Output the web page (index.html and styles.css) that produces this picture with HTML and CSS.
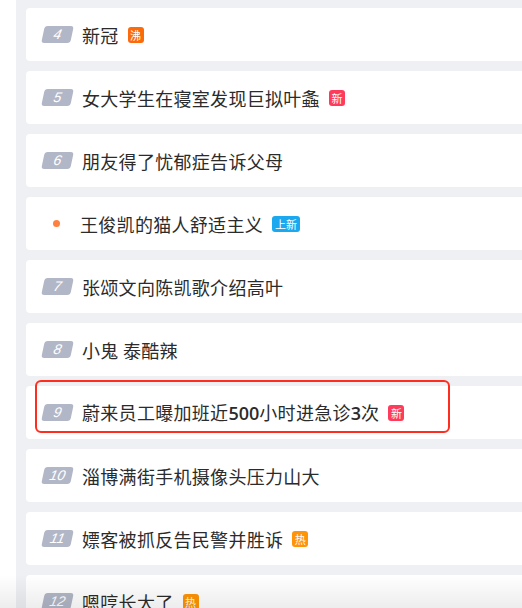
FILE: index.html
```html
<!DOCTYPE html>
<html lang="zh">
<head>
    <meta charset="UTF-8" />
    <meta name="viewport" content="width=device-width, initial-scale=1.0" />
    <title>热搜榜</title>
    <link rel="stylesheet" href="styles.css">
</head>
<body>
    <div class="lista">
        <div class="item"><span class="rank">4</span><span class="titulo">新冠</span><span class="tag tag-fei">沸</span></div>
        <div class="item"><span class="rank">5</span><span class="titulo">女大学生在寝室发现巨拟叶螽</span><span class="tag tag-xin">新</span></div>
        <div class="item"><span class="rank">6</span><span class="titulo">朋友得了忧郁症告诉父母</span></div>
        <div class="item item-punto"><span class="punto"></span><span class="titulo">王俊凯的猫人舒适主义</span><span class="tag tag-shang">上新</span></div>
        <div class="item"><span class="rank">7</span><span class="titulo">张颂文向陈凯歌介绍高叶</span></div>
        <div class="item"><span class="rank">8</span><span class="titulo">小鬼 泰酷辣</span></div>
        <div class="item marcado"><span class="rank">9</span><span class="titulo">蔚来员工曝加班近<b>500</b>小时进急诊<b>3</b>次</span><span class="tag tag-xin">新</span><span class="recuadro"></span></div>
        <div class="item"><span class="rank">10</span><span class="titulo">淄博满街手机摄像头压力山大</span></div>
        <div class="item"><span class="rank">11</span><span class="titulo">嫖客被抓反告民警并胜诉</span><span class="tag tag-re">热</span></div>
        <div class="item"><span class="rank">12</span><span class="titulo">嗯哼长大了</span><span class="tag tag-re">热</span></div>
    </div>
    <div class="sombra"></div>
</body>
</html>
```

FILE: styles.css
```css
* {
    margin: 0;
    padding: 0;
    box-sizing: border-box;
}

body {
    background: #ffffff;
    font-family: "Noto Sans CJK SC", "Noto Sans", sans-serif;
    color: #333333;
    overflow: hidden;
}

.lista {
    margin-left: 16px;
    background: #eff0f4;
    padding: 8px 0 0 10px;
    min-height: 640px;
}

.item {
    position: relative;
    display: flex;
    align-items: center;
    height: 53px;
    margin-bottom: 10px;
    padding-left: 17px;
    background: #ffffff;
    border-radius: 4px 0 0 4px;
}

.rank {
    width: 29px;
    height: 17px;
    margin-right: 10px;
    background: #b2b7c7;
    border-radius: 3px;
    transform: skewX(-12deg);
    color: #ffffff;
    font-family: "Liberation Sans", sans-serif;
    font-style: italic;
    font-size: 14px;
    line-height: 17px;
    text-align: center;
}

.titulo {
    font-size: 18px;
    line-height: 24px;
    letter-spacing: 0.3px;
    color: #2b2b2b;
}

.titulo b {
    font-family: "Open Sans", sans-serif;
    font-weight: 600;
    letter-spacing: 0;
}

.tag {
    margin-left: 9px;
    height: 16px;
    padding: 0 2px;
    min-width: 16px;
    border-radius: 3px;
    color: #ffffff;
    font-size: 11px;
    line-height: 16px;
    text-align: center;
}

.tag-fei { background: #fb6a0b; }
.tag-xin { background: #ff3b5b; }
.tag-re { background: #ff9406; }
.tag-shang { background: #1ba8ef; padding: 0 3px; }

.item-punto {
    padding-left: 27px;
}

.punto {
    width: 7px;
    height: 7px;
    margin-right: 20px;
    border-radius: 50%;
    background: #ff7f3f;
}

.recuadro {
    position: absolute;
    top: -6px;
    left: 9px;
    width: 415px;
    height: 53px;
    border: 2px solid #ff2d1f;
    border-radius: 6px;
}

.sombra {
    position: fixed;
    left: 0;
    right: 0;
    bottom: 0;
    height: 33px;
    background: linear-gradient(to bottom, rgba(0, 0, 0, 0), rgba(0, 0, 0, 0.07));
}
```
